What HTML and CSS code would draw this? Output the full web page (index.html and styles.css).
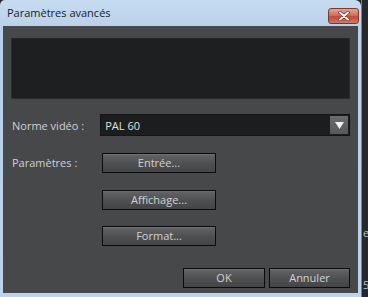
FILE: index.html
```html
<!DOCTYPE html>
<html lang="fr">
<head>
    <meta charset="UTF-8">
    <title>Paramètres avancés</title>
    <link rel="stylesheet" href="styles.css">
</head>
<body>
    <div class="window">
        <div class="titlebar">
            <span class="title">Paramètres avancés</span>
            <button class="close" aria-label="Fermer">
                <svg width="12" height="10" viewBox="0 0 12 10">
                    <path d="M2 1.5 L10 8.5 M10 1.5 L2 8.5" stroke="#6b2a22" stroke-width="3.4" stroke-linecap="round"/>
                    <path d="M2 1.5 L10 8.5 M10 1.5 L2 8.5" stroke="#ffffff" stroke-width="2" stroke-linecap="round"/>
                </svg>
            </button>
        </div>

        <div class="content">
            <div class="preview"></div>

            <div class="row row-norme">
                <label class="label">Norme vidéo :</label>
                <div class="select">
                    <span class="select-value">PAL 60</span>
                    <span class="select-arrow">
                        <svg width="9" height="7" viewBox="0 0 9 7"><path d="M0 0 H9 L4.5 7 Z" fill="#f2f2f2"/></svg>
                    </span>
                </div>
            </div>

            <div class="row row-params">
                <span class="label">Paramètres :</span>
                <div class="param-buttons">
                    <button class="btn btn-wide">Entrée...</button>
                    <button class="btn btn-wide">Affichage...</button>
                    <button class="btn btn-wide">Format...</button>
                </div>
            </div>

            <div class="footer">
                <button class="btn btn-ok">OK</button>
                <button class="btn btn-cancel">Annuler</button>
            </div>
        </div>
    </div>

    <div class="behind">
        <span class="frag frag-e">e</span>
        <span class="frag frag-5">5</span>
    </div>
</body>
</html>
```

FILE: styles.css
```css
body {
    margin: 0;
    height: 297px;
    display: flex;
    background-color: #24272a;
    font-family: 'Open Sans', 'Noto Sans', sans-serif;
    font-size: 11px;
    overflow: hidden;
}

/* fenêtre style Windows 7 */
.window {
    width: 361px;
    height: 297px;
    box-sizing: border-box;
    display: flex;
    flex-direction: column;
    padding: 0 3px 4px 3px;
    background: linear-gradient(#c7dcf1, #b7cfe8 30px, #bdd3ea);
    border-radius: 5px 6px 0 0;
    flex-shrink: 0;
}

.titlebar {
    height: 26px;
    display: flex;
    align-items: center;
    padding-left: 4px;
}

.title {
    color: #1b1b1b;
    font-size: 11px;
    flex: 1;
    margin-top: -1px;
}

.close {
    width: 31px;
    height: 16px;
    margin-right: -1px;
    margin-top: 5px;
    padding: 0;
    border: 1px solid #7a3a32;
    border-radius: 3px;
    background: linear-gradient(#e7a194, #d2705f 45%, #c24a35 55%, #d0786a);
    display: flex;
    align-items: center;
    justify-content: center;
}

.content {
    flex: 1;
    background-color: #47484a;
    padding: 12px 8px 0 8px;
    color: #d0d0d0;
}

.preview {
    height: 59px;
    background-color: #1e1f21;
    border: 1px solid #2c2d2f;
    border-top-color: #242527;
}

.row {
    display: flex;
    align-items: flex-start;
}

.label {
    width: 89px;
    padding-left: 1px;
    color: #d0d0d0;
    font-size: 11px;
}

.row-norme {
    margin-top: 15px;
    height: 22px;
    align-items: center;
}

.select {
    width: 250px;
    height: 20px;
    display: flex;
    align-items: center;
    background-color: #1c1d1f;
    border: 1px solid #151516;
}

.select-value {
    flex: 1;
    padding-left: 4px;
    font-size: 11px;
    color: #e0e0e0;
}

.select-arrow {
    width: 18px;
    height: 18px;
    margin-right: 1px;
    display: flex;
    align-items: center;
    justify-content: center;
    background: linear-gradient(#6a6b6d, #57585a);
}

.row-params {
    margin-top: 17px;
}

.row-params .label {
    padding-top: 2px;
}

.param-buttons {
    display: flex;
    flex-direction: column;
    gap: 17px;
    padding-left: 1px;
}

.btn {
    height: 20px;
    padding: 0;
    border: 1px solid #0c0c0c;
    background: linear-gradient(#636466, #4e4f51 55%, #444547);
    color: #d2d2d2;
    font-family: 'Open Sans', 'Noto Sans', sans-serif;
    font-size: 11px;
    line-height: 16px;
    box-shadow: inset 0 1px 0 rgba(255, 255, 255, 0.08);
}

.btn-wide {
    width: 114px;
}

.param-buttons .btn:last-child {
    margin-top: -1px;
}

.footer {
    display: flex;
    justify-content: flex-end;
    gap: 4px;
    margin-top: 22px;
}

.btn-ok {
    width: 82px;
}

.btn-cancel {
    width: 81px;
}

/* bout d'application derrière la fenêtre */
.behind {
    flex: 1;
    position: relative;
    border-left: 1px solid #5a8fa6;
    background-color: #26292c;
}

.frag {
    position: absolute;
    left: 1px;
    color: #b8c3cc;
    font-size: 11px;
}

.frag-e {
    top: 225px;
}

.frag-5 {
    top: 277px;
}
```
